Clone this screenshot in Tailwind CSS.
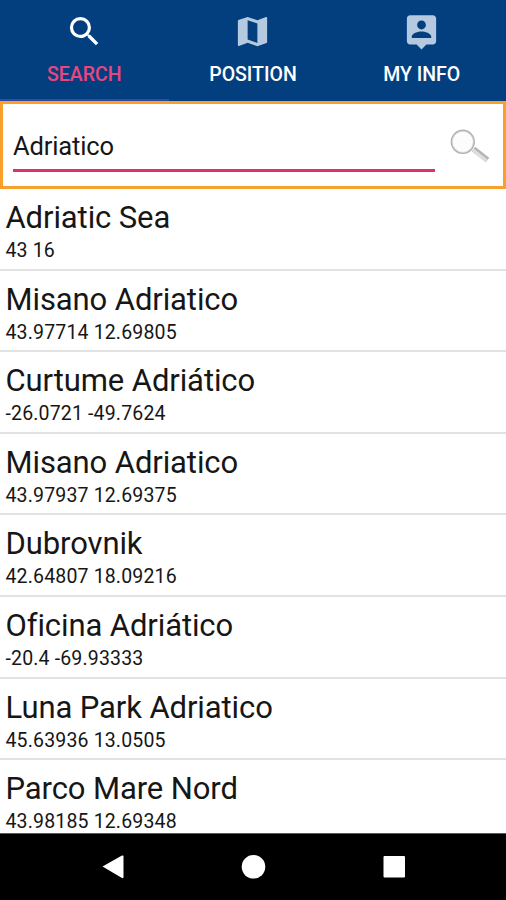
<!DOCTYPE html>
<html lang="it">
<head>
  <meta charset="UTF-8">
  <title>Search</title>
  <script src="https://cdn.jsdelivr.net/npm/@tailwindcss/browser@4"></script>
</head>
<body class="bg-white text-[#161616] font-[Roboto,sans-serif]">
  <div class="w-[506px] h-[900px] flex flex-col overflow-hidden">

    <!-- tabs -->
    <div class="h-[101px] shrink-0 grid grid-cols-3 bg-[#033f7f] text-white text-[19.5px] font-medium leading-6">
      <div class="flex flex-col items-center pt-[12px] text-[#e8467f] border-b-2 border-[#37479c]">
        <svg class="w-[39px] h-[39px]" viewBox="0 0 24 24" fill="#fff"><path d="M15.5 14h-.79l-.28-.27A6.47 6.47 0 0 0 16 9.500 6.500 6.500 0 1 0 9.500 16c1.610 0 3.090-.59 4.230-1.570l.27.28v.79l5 4.990L20.490 19l-4.990-5zm-6 0C7.010 14 5 11.990 5 9.500S7.010 5 9.500 5 14 7.010 14 9.500 11.990 14 9.500 14z"/></svg>
        <span class="mt-[12px]">SEARCH</span>
      </div>
      <div class="flex flex-col items-center pt-[12px]">
        <svg class="w-[39px] h-[39px]" viewBox="0 0 24 24" fill="#b5cae0"><path d="M20.500 3l-.16.03L15 5.100 9 3 3.360 4.900c-.21.07-.36.25-.36.48V20.500c0 .28.22.5.5.5l.16-.03L9 18.900l6 2.100 5.640-1.900c.21-.07.36-.25.36-.48V3.500c0-.28-.22-.5-.5-.5zM15 19l-6-2.110V5l6 2.110V19z"/></svg>
        <span class="mt-[12px]">POSITION</span>
      </div>
      <div class="flex flex-col items-center pt-[12px]">
        <svg class="w-[39px] h-[39px]" viewBox="0 0 24 24" fill="#b5cae0"><path d="M19 2H5c-1.110 0-2 .9-2 2v14c0 1.100.89 2 2 2h4l3 3 3-3h4c1.100 0 2-.9 2-2V4c0-1.100-.9-2-2-2zm-7 3.300c1.490 0 2.700 1.210 2.700 2.700 0 1.490-1.210 2.700-2.700 2.700-1.490 0-2.700-1.210-2.700-2.700 0-1.490 1.210-2.700 2.700-2.700zM18 16H6v-.9c0-2 4-3.100 6-3.100s6 1.100 6 3.100v.9z"/></svg>
        <span class="mt-[12px]">MY INFO</span>
      </div>
    </div>

    <!-- search box -->
    <div class="h-[88px] shrink-0 flex border-[3px] border-[#f9a02c] pl-[10px]">
      <div class="w-[422px] h-[68px] pt-[27px] border-b-[3px] border-[#e0306f] text-[25.5px] leading-[30px] tracking-[-0.15px]">Adriatico</div>
      <svg class="ml-[14px] mt-[22px] w-[42px] h-[40px]" viewBox="0 0 42 40" fill="none">
        <path d="M24.500 23L38.500 34" stroke="#b4b4b4" stroke-width="5.500"/>
        <path d="M24 24L37.500 34.700" stroke="#dedede" stroke-width="3"/>
        <circle cx="13.800" cy="15.800" r="11.300" fill="#fcfcfc" stroke="#b0b0b0" stroke-width="1.800"/>
        <circle cx="13.800" cy="15.800" r="10.600" stroke="#dcdcdc" stroke-width="0.800"/>
      </svg>
    </div>

    <!-- results -->
    <div id="results" class="h-[645px] flex-1 overflow-hidden"></div>

    <!-- system navigation -->
    <div class="h-[67px] shrink-0 bg-black border-t border-[#5a5a5a]">
      <svg class="w-[506px] h-[66px]" viewBox="0 0 506 66" fill="#fff">
        <path d="M102.500 32.500L122 21.500Q123.500 21 123.500 22.500V43Q123.500 44.500 122 44Z"/>
        <circle cx="253.500" cy="32.800" r="11.800"/>
        <rect x="383.500" y="22" width="21.500" height="21.500" rx="1"/>
      </svg>
    </div>
  </div>

  <script>
    const places = [
      ['Adriatic Sea', '43 16'],
      ['Misano Adriatico', '43.97714 12.69805'],
      ['Curtume Adriático', '-26.0721 -49.7624'],
      ['Misano Adriatico', '43.97937 12.69375'],
      ['Dubrovnik', '42.64807 18.09216'],
      ['Oficina Adriático', '-20.4 -69.93333'],
      ['Luna Park Adriatico', '45.63936 13.0505'],
      ['Parco Mare Nord', '43.98185 12.69348']
    ];

    document.getElementById('results').innerHTML = places.map(([name, coords]) => `
      <div class="h-[81.6px] pl-[5.5px] pt-[10px] border-b-2 border-[#e2e2e2]">
        <div class="text-[31px] leading-[37px] tracking-[-0.1px]">${name}</div>
        <div class="mt-[3px] text-[19.5px] leading-[24px] tracking-[0.16px]">${coords}</div>
      </div>
    `).join('');
  </script>
</body>
</html>
